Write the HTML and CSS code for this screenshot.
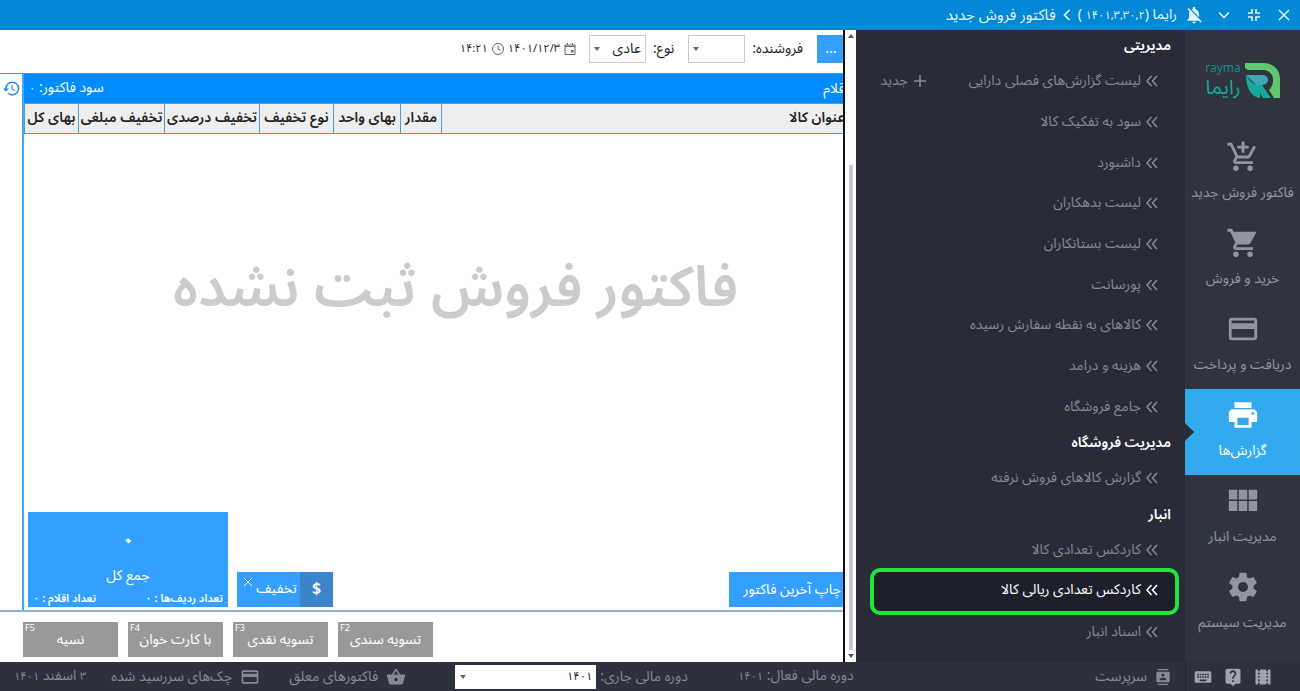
FILE: index.html
```html
<!DOCTYPE html>
<html lang="fa" dir="rtl">
<head>
<meta charset="utf-8">
<meta name="viewport" content="width=device-width, initial-scale=1">
<title>فاکتور فروش جدید</title>
<link rel="stylesheet" href="styles.css">
</head>
<body>
<svg width="0" height="0" class="sprite" aria-hidden="true">
  <symbol id="card" viewBox="0 0 24 24"><path d="M20 4H4c-1.11 0-1.99.89-1.99 2L2 18c0 1.11.89 2 2 2h16c1.11 0 2-.89 2-2V6c0-1.11-.89-2-2-2zm0 14H4v-6h16v6zm0-10H4V6h16v2z"/></symbol>
  <symbol id="dbl" viewBox="0 0 12 12"><path d="M5.5 1 1 6l4.500 5M11 1 6.500 6l4.500 5" fill="none" stroke="currentColor" stroke-width="1.600"/></symbol>
</svg>

<header class="titlebar">
  <button class="win" aria-label="بستن"><svg viewBox="0 0 16 16"><path d="M3 3l10 10M13 3 3 13" fill="none" stroke="currentColor" stroke-width="1.500"/></svg></button>
  <button class="win" aria-label="کوچک کردن"><svg viewBox="0 0 16 16"><path d="M6 2v4H2M10 2v4h4M6 14v-4H2M10 14v-4h4" fill="none" stroke="currentColor" stroke-width="1.600"/></svg></button>
  <button class="win" aria-label="بیشتر"><svg viewBox="0 0 16 16"><path d="M3 5.500l5 5 5-5" fill="none" stroke="currentColor" stroke-width="1.600"/></svg></button>
  <button class="win bell" aria-label="اعلان‌ها"><svg viewBox="0 0 24 24"><path fill="currentColor" d="M20 18.690 7.840 6.140 5.270 3.490 4 4.760l2.800 2.800v.01c-.52.990-.8 2.160-.8 3.420v5l-2 2v1h13.730l2 2L21 19.720l-1-1.030zM12 22c1.110 0 2-.89 2-2h-4c0 1.110.89 2 2 2zm6-7.320V11c0-3.080-1.640-5.640-4.500-6.320V4c0-.83-.67-1.500-1.500-1.500s-1.500.67-1.500 1.500v.68c-.15.030-.29.080-.42.120-.1.030-.2.070-.3.110h-.01c-.01 0-.01 0-.02.010-.23.090-.46.200-.68.310 0 0-.01 0-.01.010L18 14.680z"/></svg></button>
  <span class="app">رایما (<small>۱۴۰۱,۳,۳۰,۲</small> )</span>
  <svg class="crumb" viewBox="0 0 12 12"><path d="M8.500 1 3.500 6l5 5" fill="none" stroke="currentColor" stroke-width="1.700"/></svg>
  <h1>فاکتور فروش جدید</h1>
</header>

<div class="main">
  <nav class="rail">
    <div class="logo">
      <div class="logo-words"><span class="logo-en">rayma</span><span class="logo-fa">رایما</span></div>
      <svg viewBox="0 0 35 35" aria-hidden="true">
        <path d="M0 0h18c10 0 17 6 17 16v19h-6l-5-8c3-3 4-6 4-10 0-6-4-10-10-10H3L0 5z" fill="#62c671"/>
        <path d="M1 12h16c5 0 6 3 6 5s-2 5-6 5h-6z" fill="#3fa6b4"/>
        <path d="M1 12c3 4 6 9 11 10h5l9 13h-8l-3-5v5C6 34 1 25 1 12z" fill="#16a79f"/>
      </svg>
    </div>
    <a class="rail-item" href="#"><svg viewBox="0 0 24 24"><path d="M11 9h2V6h3V4h-3V1h-2v3H8v2h3v3zm-4 9c-1.100 0-1.990.9-1.990 2S5.900 22 7 22s2-.9 2-2-.9-2-2-2zm10 0c-1.100 0-1.990.9-1.990 2s.89 2 1.990 2 2-.9 2-2-.9-2-2-2zm-9.830-3.250.03-.12.9-1.630h7.450c.75 0 1.410-.41 1.750-1.030l3.860-7.010L19.420 4h-.01l-1.100 2-2.760 5H8.530l-.13-.27L6.160 6l-.95-2-.94-2H1v2h2l3.600 7.590-1.350 2.450c-.16.280-.25.610-.25.960 0 1.100.9 2 2 2h12v-2H7.420c-.13 0-.25-.11-.25-.25z"/></svg><span>فاکتور فروش جدید</span></a>
    <a class="rail-item" href="#"><svg viewBox="0 0 24 24"><path d="M7 18c-1.100 0-1.990.9-1.990 2S5.900 22 7 22s2-.9 2-2-.9-2-2-2zM1 2v2h2l3.600 7.590-1.350 2.450c-.16.280-.25.610-.25.960 0 1.100.9 2 2 2h12v-2H7.420c-.14 0-.25-.11-.25-.25l.03-.12.9-1.630h7.450c.75 0 1.410-.41 1.750-1.030l4.300-7.970H5.210l-.94-2H1zm16 16c-1.100 0-1.990.9-1.990 2s.89 2 1.990 2 2-.9 2-2-.9-2-2-2z"/></svg><span>خرید و فروش</span></a>
    <a class="rail-item" href="#"><svg viewBox="0 0 24 24"><use href="#card"/></svg><span>دریافت و پرداخت</span></a>
    <a class="rail-item active" href="#" aria-current="page"><svg viewBox="0 0 24 24"><path d="M19 8H5c-1.660 0-3 1.340-3 3v6h4v4h12v-4h4v-6c0-1.660-1.340-3-3-3zm-3 11H8v-5h8v5zm3-7c-.55 0-1-.45-1-1s.45-1 1-1 1 .45 1 1-.45 1-1 1zm-1-9H6v4h12V3z"/></svg><span>گزارش‌ها</span></a>
    <a class="rail-item" href="#"><svg viewBox="0 0 24 24"><path d="M2 4h6v7H2zM9 4h6v7H9zM16 4h6v7h-6zM2 12h6v7H2zM9 12h6v7H9zM16 12h6v7h-6z"/></svg><span>مدیریت انبار</span></a>
    <a class="rail-item" href="#"><svg viewBox="0 0 24 24"><path d="M19.430 12.980c.04-.32.070-.64.070-.98s-.03-.66-.07-.98l2.110-1.650c.19-.15.240-.42.120-.64l-2-3.460c-.12-.22-.39-.3-.61-.22l-2.490 1c-.52-.4-1.080-.73-1.690-.98l-.38-2.650A.49.490 0 0 0 14 2h-4c-.25 0-.46.180-.49.420l-.38 2.650c-.61.250-1.170.590-1.690.980l-2.490-1c-.23-.09-.49 0-.61.220l-2 3.460c-.13.220-.07.490.12.640l2.110 1.650c-.04.320-.07.650-.07.980s.03.660.07.980l-2.110 1.650c-.19.150-.24.420-.12.640l2 3.460c.12.220.39.300.61.220l2.490-1c.52.400 1.080.730 1.690.980l.38 2.650c.03.240.24.420.49.420h4c.25 0 .46-.18.490-.42l.38-2.650c.61-.25 1.170-.59 1.690-.98l2.490 1c.23.090.49 0 .61-.22l2-3.460c.12-.22.070-.49-.12-.64l-2.110-1.650zM12 15.500c-1.930 0-3.500-1.570-3.500-3.500s1.570-3.500 3.500-3.500 3.500 1.570 3.500 3.500-1.570 3.500-3.500 3.500z"/></svg><span>مدیریت سیستم</span></a>
  </nav>

  <aside class="menu">
    <h2>مدیریتی</h2>
    <div class="menu-row"><a href="#"><svg><use href="#dbl"/></svg>لیست گزارش‌های فصلی دارایی</a><button class="new"><svg viewBox="0 0 14 14"><path d="M7 1v12M1 7h12" fill="none" stroke="currentColor" stroke-width="1.600"/></svg>جدید</button></div>
    <div class="menu-row"><a href="#"><svg><use href="#dbl"/></svg>سود به تفکیک کالا</a></div>
    <div class="menu-row"><a href="#"><svg><use href="#dbl"/></svg>داشبورد</a></div>
    <div class="menu-row"><a href="#"><svg><use href="#dbl"/></svg>لیست بدهکاران</a></div>
    <div class="menu-row"><a href="#"><svg><use href="#dbl"/></svg>لیست بستانکاران</a></div>
    <div class="menu-row"><a href="#"><svg><use href="#dbl"/></svg>پورسانت</a></div>
    <div class="menu-row"><a href="#"><svg><use href="#dbl"/></svg>کالاهای به نقطه سفارش رسیده</a></div>
    <div class="menu-row"><a href="#"><svg><use href="#dbl"/></svg>هزینه و درامد</a></div>
    <div class="menu-row"><a href="#"><svg><use href="#dbl"/></svg>جامع فروشگاه</a></div>
    <h2>مدیریت فروشگاه</h2>
    <div class="menu-row"><a href="#"><svg><use href="#dbl"/></svg>گزارش کالاهای فروش نرفته</a></div>
    <h2>انبار</h2>
    <div class="menu-row"><a href="#"><svg><use href="#dbl"/></svg>کاردکس تعدادی کالا</a></div>
    <div class="menu-row selected"><a href="#"><svg><use href="#dbl"/></svg>کاردکس تعدادی ریالی کالا</a></div>
    <div class="menu-row"><a href="#"><svg><use href="#dbl"/></svg>اسناد انبار</a></div>
  </aside>

  <div class="scrollbar" aria-hidden="true"><i class="up"></i><i class="thumb"></i><i class="down"></i></div>

  <main class="work">
    <div class="sheet">
      <div class="tools">
        <button class="more">...</button>
        <label for="seller">فروشنده:</label>
        <div class="pick"><select id="seller"><option></option></select></div>
        <label for="kind">نوع:</label>
        <div class="pick"><select id="kind"><option>عادی</option></select></div>
        <div class="stamp">
          <svg viewBox="0 0 14 14"><path d="M2 3h10v9.500H2zM2 4.500h10M4.500 1v2M9.500 1v2" fill="none" stroke="currentColor"/><path d="M8 8h2.500v2.500H8z" fill="currentColor"/></svg>
          <span>۱۴۰۱/۱۲/۳</span>
          <svg viewBox="0 0 14 14"><path d="M7 3.500V7l2.500 1.500" fill="none" stroke="currentColor"/><circle cx="7" cy="7" r="5.500" fill="none" stroke="currentColor"/></svg>
          <span>۱۴:۲۱</span>
        </div>
      </div>

      <div class="invoice">
        <section class="lines">
          <div class="bar"><span>اقلام</span><span>سود فاکتور: <small>۰</small></span></div>
          <table class="grid">
            <thead><tr><th class="name">عنوان کالا</th><th class="qty">مقدار</th><th class="unit">بهای واحد</th><th class="dtype">نوع تخفیف</th><th class="dpct">تخفیف درصدی</th><th class="damt">تخفیف مبلغی</th><th class="sum">بهای کل</th></tr></thead>
          </table>
          <p class="empty">فاکتور فروش ثبت نشده</p>
          <div class="totals">
            <button class="print">چاپ آخرین فاکتور</button>
            <div class="discount"><b>$</b><span>تخفیف</span><button aria-label="حذف تخفیف"><svg viewBox="0 0 10 10"><path d="M1 1l8 8M9 1 1 9" fill="none" stroke="currentColor"/></svg></button></div>
            <div class="total">
              <strong>۰</strong>
              <span>جمع کل</span>
              <div class="counts"><span>تعداد ردیف‌ها : ۰</span><span>تعداد اقلام : ۰</span></div>
            </div>
          </div>
        </section>
        <div class="side"><button aria-label="تاریخچه"><svg viewBox="0 0 24 24"><path fill="currentColor" d="M13 3a9 9 0 0 0-9 9H1l3.890 3.890.07.140L9 12H6c0-3.870 3.130-7 7-7s7 3.130 7 7-3.130 7-7 7c-1.930 0-3.680-.79-4.940-2.060l-1.420 1.420A8.950 8.950 0 0 0 13 21a9 9 0 0 0 0-18zm-1 5v5l4.280 2.540.72-1.210-3.500-2.080V8H12z"/></svg></button></div>
      </div>

      <div class="pay">
        <button><kbd>F2</kbd>تسویه سندی</button>
        <button><kbd>F3</kbd>تسویه نقدی</button>
        <button><kbd>F4</kbd>با کارت خوان</button>
        <button><kbd>F5</kbd>نسیه</button>
      </div>
    </div>
  </main>
</div>

<footer class="status">
  <div class="quick">
    <button aria-label="فیلم آموزشی"><svg viewBox="0 0 24 24"><path d="M18 3v2h-2V3H8v2H6V3H3v18h3v-2h2v2h8v-2h2v2h3V3h-3zM8 17H6v-2h2v2zm0-4H6v-2h2v2zm0-4H6V7h2v2zm10 8h-2v-2h2v2zm0-4h-2v-2h2v2zm0-4h-2V7h2v2z"/></svg></button>
    <button aria-label="راهنما"><svg viewBox="0 0 24 24"><path d="M19 2H5a2 2 0 0 0-2 2v14c0 1.100.9 2 2 2h4l3 3 3-3h4c1.100 0 2-.9 2-2V4c0-1.100-.9-2-2-2zm-6 16h-2v-2h2v2zm2.070-7.750-.9.920C13.450 11.900 13 12.500 13 14h-2v-.5c0-1.100.45-2.100 1.170-2.830l1.240-1.260c.37-.36.590-.86.590-1.410 0-1.100-.9-2-2-2s-2 .9-2 2H8c0-2.210 1.790-4 4-4s4 1.790 4 4c0 .88-.36 1.680-.93 2.250z"/></svg></button>
    <button aria-label="صفحه‌کلید"><svg viewBox="0 0 24 24"><path d="M20 5H4c-1.100 0-1.990.9-1.990 2L2 17c0 1.100.9 2 2 2h16c1.100 0 2-.9 2-2V7c0-1.100-.9-2-2-2zm-9 3h2v2h-2V8zm0 3h2v2h-2v-2zM8 8h2v2H8V8zm0 3h2v2H8v-2zm-1 2H5v-2h2v2zm0-3H5V8h2v2zm9 7H8v-2h8v2zm0-4h-2v-2h2v2zm0-3h-2V8h2v2zm3 3h-2v-2h2v2zm0-3h-2V8h2v2z"/></svg></button>
  </div>
  <a class="user" href="#"><svg viewBox="0 0 24 24"><path d="M20 0H4v2h16V0zM4 24h16v-2H4v2zM20 4H4a2 2 0 0 0-2 2v12c0 1.100.9 2 2 2h16c1.100 0 2-.9 2-2V6c0-1.100-.9-2-2-2zm-8 2.750a2.250 2.250 0 1 1 0 4.500 2.250 2.250 0 0 1 0-4.500zM17 17H7v-1.500c0-1.670 3.330-2.500 5-2.500s5 .83 5 2.500V17z"/></svg>سرپرست</a>
  <span class="period">دوره مالی فعال: <small>۱۴۰۱</small></span>
  <label for="year">دوره مالی جاری:</label>
  <div class="pick year"><select id="year"><option>۱۴۰۱</option></select></div>
  <a class="held" href="#"><svg viewBox="0 0 24 24"><path d="m17.210 9-4.380-6.560a1 1 0 0 0-1.660.010L6.790 9H2c-.55 0-1 .45-1 1 0 .09.010.18.040.270l2.540 9.270c.23.840 1 1.460 1.920 1.460h13c.92 0 1.690-.62 1.930-1.460l2.540-9.270L23 10c0-.55-.45-1-1-1h-4.790zM9 9l3-4.400L15 9H9zm3 8a2 2 0 1 1 0-4 2 2 0 0 1 0 4z"/></svg>فاکتورهای معلق</a>
  <a class="cheques" href="#"><svg viewBox="0 0 24 24"><use href="#card"/></svg>چک‌های سررسید شده</a>
  <time><small>۳</small> اسفند <small>۱۴۰۱</small></time>
</footer>
</body>
</html>
```
FILE: styles.css
```css
* { box-sizing: border-box; }
html, body { height: 100%; }
body {
  margin: 0;
  display: flex;
  flex-direction: column;
  overflow: hidden;
  background: #fff;
  color: #222;
  font: 14px/20px "Noto Sans Arabic", "Noto Sans", "DejaVu Sans", sans-serif;
  white-space: nowrap;
}
h1, h2, p { margin: 0; font-weight: normal; }
a { color: inherit; text-decoration: none; }
small { font-size: 11px; }
button, select { font: inherit; color: inherit; border: 0; padding: 0; margin: 0; background: none; border-radius: 0; }
svg { display: block; flex: none; fill: currentColor; }
.sprite { position: absolute; }

.titlebar {
  flex: 0 0 30px;
  display: flex;
  align-items: center;
  padding-right: 1px;
  background: #0288d5;
  color: #e4f6ff;
}
.titlebar h1 { font-size: 15px; }
.win { width: 30px; height: 30px; display: grid; place-items: center; }
.win svg { width: 16px; height: 16px; }
.win.bell svg { width: 20px; height: 20px; }
.win.bell { margin-left: 2px; }
.crumb { width: 12px; height: 12px; margin: 0 5px; }

.main { flex: 1; min-height: 0; display: flex; }

.rail { flex: 0 0 115px; background: #30343f; color: #9095a0; }
.logo { height: 101px; display: flex; align-items: center; justify-content: center; gap: 4px; flex-direction: row-reverse; }
.logo svg { width: 35px; height: 35px; }
.logo-words { display: flex; flex-direction: column; align-items: center; color: #16a79f; }
.logo-en { font: 12px/14px "Noto Sans", sans-serif; color: #188a86; }
.logo-fa { font-size: 20px; line-height: 26px; }
.rail-item {
  position: relative;
  height: 86px;
  display: flex;
  flex-direction: column;
  align-items: center;
  justify-content: center;
  gap: 9px;
  padding-bottom: 5px;
}
.rail-item svg { width: 34px; height: 34px; }
.rail-item.active { background: #33aaf0; color: #fff; }
.rail-item.active::before {
  content: "";
  position: absolute;
  left: 0;
  top: 34px;
  border: 9px solid transparent;
  border-right-width: 0;
  border-left-color: #292d38;
}

.menu {
  flex: 0 0 329px;
  display: flex;
  flex-direction: column;
  padding-bottom: 10px;
  background: #292c38;
  color: #848893;
}
.menu h2 {
  flex: 0 0 31px;
  padding-right: 14px;
  font-size: 14px;
  font-weight: 600;
  line-height: 31px;
  color: #fff;
}
.menu-row { flex: 1 1 0; display: flex; align-items: center; padding-right: 27px; }
.menu-row a { display: flex; align-items: center; gap: 5px; }
.menu-row a svg { width: 12px; height: 12px; }
.new { display: flex; align-items: center; gap: 5px; margin-right: 42px; }
.new svg { width: 14px; height: 14px; }
.menu-row.selected {
  flex: 0 0 47px;
  margin: -2px 6px -4px 14px;
  padding-right: 17px;
  padding-bottom: 3px;
  border: 4px solid #1fe63c;
  border-radius: 10px;
  background: #1d1f2b;
  color: #fff;
}

.scrollbar {
  flex: 0 0 13px;
  display: flex;
  flex-direction: column;
  align-items: center;
  padding: 4px 0;
  background: #fff;
  border-left: 2px solid #111;
}
.scrollbar i { display: block; }
.up, .down { border: 3px solid transparent; }
.up { border-top: 0; border-bottom: 4px solid #555; }
.down { border-bottom: 0; border-top: 4px solid #555; }
.thumb { flex: 1; width: 4px; margin: 127px 0 4px; background: #c9c9c9; }

.work { flex: 1; min-width: 0; overflow: hidden; display: flex; }
.sheet { flex: 1; min-width: 0; margin-right: -44px; display: flex; flex-direction: column; }
.tools { flex: 0 0 43px; display: flex; align-items: center; padding-bottom: 5px; padding-right: 4px; }
.more { width: 66px; height: 28px; padding-right: 38px; background: #349fff; color: #fff; text-align: center; }
.tools label { margin: 0 14px 0 7px; }
.pick { position: relative; }
.pick::after {
  content: "";
  position: absolute;
  left: 5px;
  top: 50%;
  margin-top: -2px;
  border: 3px solid transparent;
  border-top: 4px solid #666;
  border-bottom: 0;
  pointer-events: none;
}
.pick select { appearance: none; display: block; width: 57px; height: 28px; padding: 0 4px; border: 1px solid #ccc; background: #fff; }
.stamp { display: flex; align-items: center; gap: 3px; margin-right: 12px; font-size: 11px; }
.stamp svg { width: 14px; height: 14px; color: #666; }

.invoice { flex: 1; min-height: 0; display: flex; border-top: 1px solid #3a9cec; border-bottom: 2px solid #83b4de; }
.side { flex: 0 0 22px; padding-top: 5px; }
.side button { width: 22px; color: #2b8be0; }
.side svg { width: 19px; height: 19px; margin: 0 auto; }
.lines { flex: 1; min-width: 0; display: flex; flex-direction: column; border-left: 2px solid #4aa5ee; }
.bar { flex: 0 0 29px; display: flex; align-items: center; justify-content: space-between; padding: 0 39px 0 5px; background: #008cff; color: #fff; }
.grid { width: 100%; table-layout: fixed; border-collapse: collapse; }
.grid th {
  height: 30px;
  padding: 0 0 2px;
  background: #efeeef;
  border: 1px solid #4d9dde;
  font-weight: 600;
  line-height: 26px;
}
.grid .name { text-align: right; padding-right: 41px; }
.qty { width: 41px; }
.unit { width: 67px; }
.dtype { width: 74px; }
.dpct { width: 95px; }
.damt { width: 86px; }
.sum { width: 54px; }
.empty { flex: 1; padding-top: 104px; text-align: center; font-size: 56px; line-height: 100px; font-weight: 600; color: #ccc; }
.totals { display: flex; align-items: flex-end; gap: 9px; padding: 0 0 3px 4px; }
.print { height: 35px; width: 158px; padding-right: 46px; margin-left: auto; background: #349fff; color: #fff; text-align: right; }
.discount { height: 35px; width: 96px; display: flex; background: #349fff; color: #fff; line-height: 34px; }
.discount b { flex: 0 0 33px; background: #3c85cc; text-align: center; font-size: 16px; font-weight: 600; }
.discount span { flex: 1; text-align: center; }
.discount button { align-self: flex-start; margin: 5px 0 0 6px; }
.discount svg { width: 10px; height: 10px; }
.total { width: 200px; height: 95px; display: flex; flex-direction: column; align-items: center; background: #349fff; color: #fff; }
.total strong { font-size: 24px; line-height: 30px; margin-top: 14px; }
.total > span { line-height: 36px; padding-top: 2px; }
.counts { align-self: stretch; display: flex; justify-content: space-between; padding: 0 5px; font-size: 11px; line-height: 10px; font-weight: 600; }

.pay { flex: 0 0 50px; display: flex; justify-content: flex-end; gap: 10px; padding: 10px 0 5px 23px; }
.pay button { position: relative; width: 95px; background: #999; color: #fff; }
.pay kbd { position: absolute; left: 2px; top: 0; font: 9px/11px "Noto Sans", sans-serif; }

.status { flex: 0 0 29px; display: flex; align-items: center; padding-left: 14px; background: #2d303d; color: #858a95; }
.status a { display: flex; align-items: center; gap: 8px; }
.status svg { width: 20px; height: 20px; }
.quick { flex: 0 0 115px; align-self: stretch; display: flex; align-items: center; gap: 10px; padding-right: 27px; border-left: 1px solid #22252f; color: #a0a4ad; }
.status .user { margin-right: 14px; }
.status .user svg { width: 16px; height: 16px; }
.period { margin-right: auto; }
.status label { margin: 0 50px 0 4px; }
.year select { width: 141px; height: 24px; border: 0; color: #111; font-size: 11px; }
.status .held { margin-right: 49px; }
.status .cheques { margin-right: 29px; }
.status time { margin-right: 25px; }
```
